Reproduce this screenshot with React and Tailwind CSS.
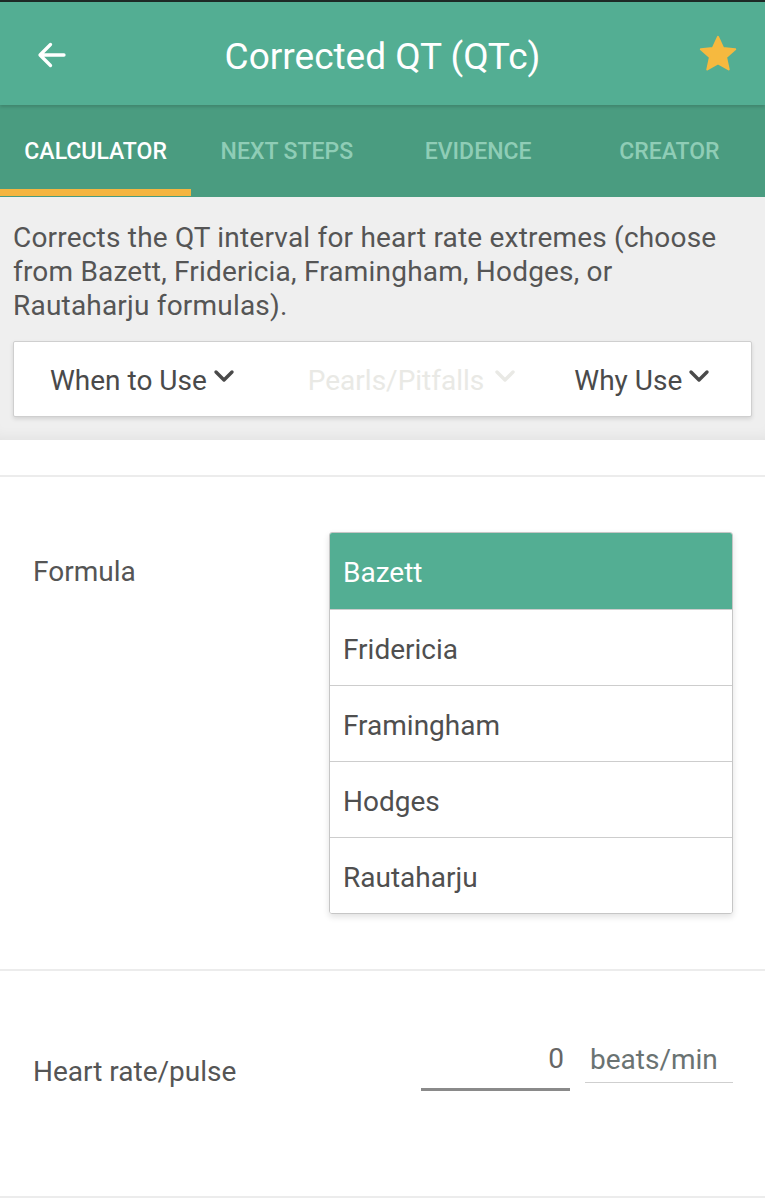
import React from "react";

function Chevron({ className }) {
  return (
    <svg viewBox="0 0 24 24" className={className} fill="none" stroke="currentColor" strokeWidth="3.4" strokeLinecap="round" strokeLinejoin="round">
      <path d="M4 7 L12 15 L20 7" />
    </svg>
  );
}

export default function App() {
  const tabs = ["CALCULATOR", "NEXT STEPS", "EVIDENCE", "CREATOR"];
  const options = ["Bazett", "Fridericia", "Framingham", "Hodges", "Rautaharju"];
  return (
    <div className="w-[765px] h-[1200px] bg-white overflow-hidden" style={{ fontFamily: "Roboto, 'Noto Sans', sans-serif" }}>
      <div className="h-[2px] bg-[#1e2a26]" />
      <header className="relative h-[103px] bg-[#53ae93] flex items-center justify-center shadow-[0_2px_3px_rgba(0,0,0,0.15)] z-10">
        <svg viewBox="0 0 24 24" className="absolute left-[34px] top-[35px] w-[36px] h-[36px]" fill="none" stroke="white" strokeWidth="2.2" strokeLinecap="round" strokeLinejoin="round">
          <path d="M20 12 H4.5 M11 5 L4 12 L11 19" />
        </svg>
        <h1 className="text-white text-[37px] leading-none mt-[5px]">Corrected QT (QTc)</h1>
        <svg viewBox="0 0 24 24" className="absolute right-[26px] top-[31px] w-[42px] h-[42px]">
          <path d="M12 2.2 L14.9 8.6 L21.8 9.3 L16.6 13.9 L18.1 20.8 L12 17.3 L5.9 20.8 L7.4 13.9 L2.2 9.3 L9.1 8.6 Z" fill="#f6b93f" stroke="#f6b93f" strokeWidth="1.2" strokeLinejoin="round" />
        </svg>
      </header>
      <nav className="h-[92px] bg-[#4a9c80] flex">
        {tabs.map((t, i) => (
          <div key={t} className="relative w-[191.25px] flex items-center justify-center pt-[2px]">
            <span className={`text-[23px] font-medium ${i === 0 ? "text-white" : "text-[#8fcdb6]"}`}>{t}</span>
            {i === 0 && <div className="absolute left-0 right-0 bottom-[1px] h-[7px] bg-[#f4b540]" />}
          </div>
        ))}
      </nav>
      <section className="bg-[#efefef] px-[13px] pt-[24px] pb-[23px] shadow-[inset_0_-12px_14px_-10px_rgba(0,0,0,0.06)]">
        <p className="w-[722px] text-[28px] leading-[34px] text-[#555] tracking-[0.2px]">
          Corrects the QT interval for heart rate extremes (choose from Bazett, Fridericia, Framingham, Hodges, or Rautaharju formulas).
        </p>
        <div className="mt-[18px] h-[76px] bg-white border border-[#cfcfcf] rounded-[2px] shadow-[0_2px_4px_rgba(0,0,0,0.12)] flex items-center text-[28px] pt-[3px]">
          <div className="flex items-center text-[#4a4a4a] ml-[36px]">
            <span>When to Use</span>
            <Chevron className="w-[24px] h-[24px] ml-[5px] mb-[8px]" />
          </div>
          <div className="flex items-center text-[#e9e9e5] ml-[72px]">
            <span>Pearls/Pitfalls</span>
            <Chevron className="w-[24px] h-[24px] ml-[9px] mb-[8px]" />
          </div>
          <div className="flex items-center text-[#4a4a4a] ml-[57px]">
            <span>Why Use</span>
            <Chevron className="w-[24px] h-[24px] ml-[5px] mb-[8px]" />
          </div>
        </div>
      </section>
      <div className="h-[35px]" />
      <div className="h-[2px] bg-[#ececec]" />
      <div className="flex items-start pt-[55px] pb-[55px]">
        <div className="w-[329px] pl-[33px] pt-[23px] text-[28px] leading-[34px] text-[#555]">Formula</div>
        <div className="w-[404px] rounded-[3px] border border-[#c6c6c6] shadow-[0_3px_6px_rgba(0,0,0,0.12)] overflow-hidden">
          {options.map((o, i) => (
            <div
              key={o}
              className={`h-[76px] flex items-center pl-[13px] pt-[4px] text-[28px] ${i === 0 ? "bg-[#53ae93] text-white" : "bg-white text-[#4f4f4f] border-t border-[#cdcdcd]"}`}
            >
              {o}
            </div>
          ))}
        </div>
      </div>
      <div className="h-[2px] bg-[#ececec]" />
      <div className="flex items-start h-[225px]">
        <div className="w-[421px] pl-[33px] mt-[84px] text-[28px] leading-[34px] text-[#555]">Heart rate/pulse</div>
        <div className="mt-[66px] w-[149px] h-[54px] border-b-[3px] border-[#8a8a8a] flex items-center justify-end pr-[6px] pb-[8px] text-[28px] text-[#666]">0</div>
        <div className="mt-[66px] ml-[15px] w-[148px] h-[46px] border-b border-[#cfcfcf] flex items-center pl-[5px] text-[28px] text-[#6a7372]">beats/min</div>
      </div>
      <div className="h-[2px] bg-[#ececec]" />
    </div>
  );
}
